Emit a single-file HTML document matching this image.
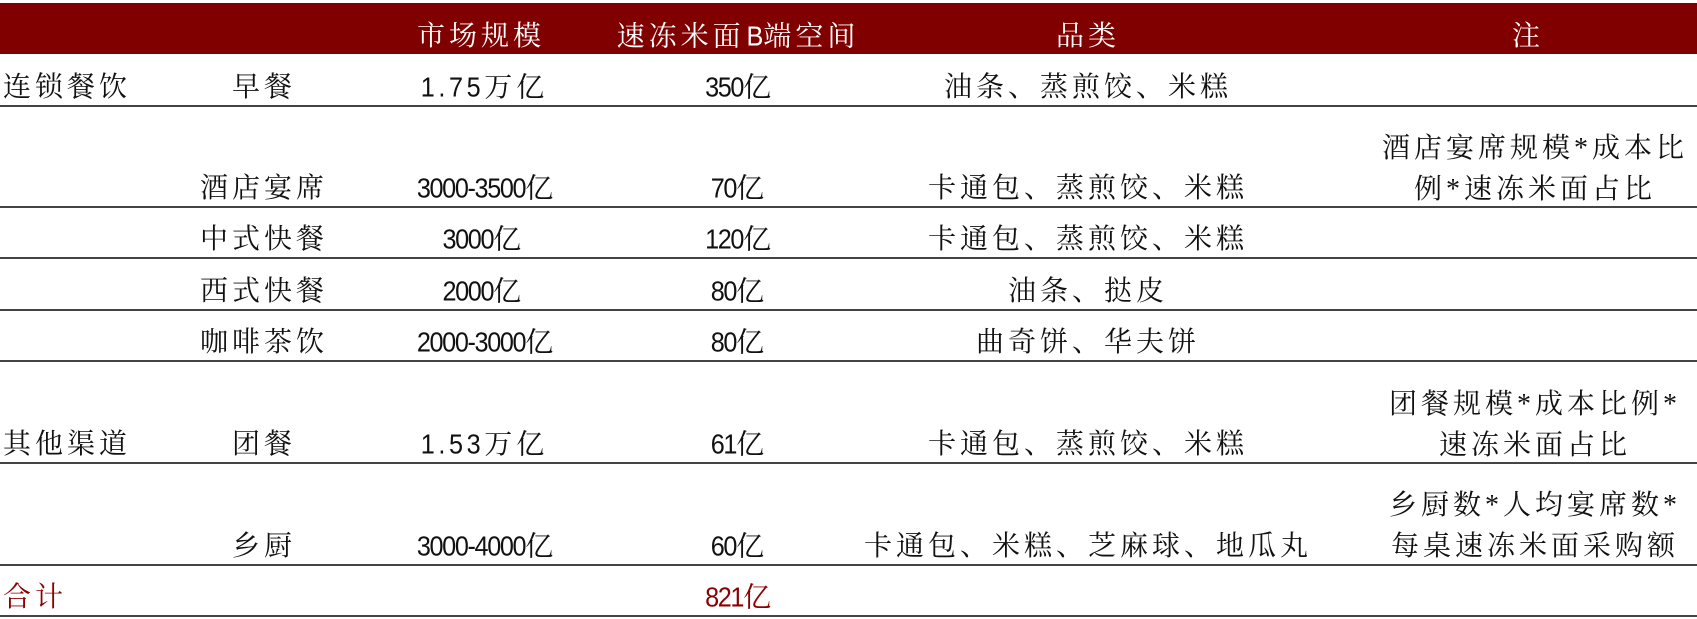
<!DOCTYPE html>
<html><head><meta charset="utf-8">
<style>
html,body{margin:0;padding:0;background:#fff;}
body{width:1697px;height:619px;position:relative;overflow:hidden;font-family:"Liberation Serif","Noto Serif CJK SC","Noto Sans CJK SC",serif;color:#111;}
.hd{position:absolute;left:0;top:3px;width:1697px;height:51px;background:#800000;}
.ln{position:absolute;left:0;width:1697px;height:2px;background:#444;}
.t{position:absolute;transform:translate(-50%,-50%);white-space:nowrap;font-size:28px;letter-spacing:4px;line-height:1;}
.l{position:absolute;transform:translateY(-50%);white-space:nowrap;font-size:28px;letter-spacing:4px;line-height:1;}
.n{font-family:"Liberation Sans",sans-serif;letter-spacing:-1.5px;font-size:28px;display:inline-block;transform:scaleX(0.9);transform-origin:right center;}
.w{color:#fff;}
.r{color:#8b0000;}
</style></head><body>
<div class="hd"></div>
<div class="t w" style="left:481px;top:37px">市场规模</div>
<div class="t w" style="left:738px;top:37px">速冻米面<span class="n" style="letter-spacing:0">B</span>端空间</div>
<div class="t w" style="left:1088px;top:37px">品类</div>
<div class="t w" style="left:1528px;top:37px">注</div>

<div class="ln" style="top:105px"></div>
<div class="ln" style="top:206px"></div>
<div class="ln" style="top:257px"></div>
<div class="ln" style="top:309px"></div>
<div class="ln" style="top:360px"></div>
<div class="ln" style="top:462px"></div>
<div class="ln" style="top:564px"></div>
<div class="ln" style="top:615px"></div>

<div class="l" style="left:3px;top:88px">连锁餐饮</div>
<div class="t" style="left:264px;top:88px">早餐</div>
<div class="t" style="left:481px;top:88px"><span class="n" style="letter-spacing:4px">1.75</span>万亿</div>
<div class="t" style="left:738px;top:88px"><span class="n">350</span>亿</div>
<div class="t" style="left:1088px;top:88px">油条、蒸煎饺、米糕</div>

<div class="t" style="left:264px;top:189px">酒店宴席</div>
<div class="t" style="left:481px;top:189px"><span class="n">3000-3500</span>亿</div>
<div class="t" style="left:738px;top:189px"><span class="n">70</span>亿</div>
<div class="t" style="left:1088px;top:189px">卡通包、蒸煎饺、米糕</div>
<div class="t" style="left:1535px;top:149px">酒店宴席规模*成本比</div>
<div class="t" style="left:1535px;top:190px">例*速冻米面占比</div>

<div class="t" style="left:264px;top:240px">中式快餐</div>
<div class="t" style="left:481px;top:240px"><span class="n">3000</span>亿</div>
<div class="t" style="left:738px;top:240px"><span class="n">120</span>亿</div>
<div class="t" style="left:1088px;top:240px">卡通包、蒸煎饺、米糕</div>

<div class="t" style="left:264px;top:292px">西式快餐</div>
<div class="t" style="left:481px;top:292px"><span class="n">2000</span>亿</div>
<div class="t" style="left:738px;top:292px"><span class="n">80</span>亿</div>
<div class="t" style="left:1088px;top:292px">油条、挞皮</div>

<div class="t" style="left:264px;top:343px">咖啡茶饮</div>
<div class="t" style="left:481px;top:343px"><span class="n">2000-3000</span>亿</div>
<div class="t" style="left:738px;top:343px"><span class="n">80</span>亿</div>
<div class="t" style="left:1088px;top:343px">曲奇饼、华夫饼</div>

<div class="l" style="left:3px;top:445px">其他渠道</div>
<div class="t" style="left:264px;top:445px">团餐</div>
<div class="t" style="left:481px;top:445px"><span class="n" style="letter-spacing:4px">1.53</span>万亿</div>
<div class="t" style="left:738px;top:445px"><span class="n">61</span>亿</div>
<div class="t" style="left:1088px;top:445px">卡通包、蒸煎饺、米糕</div>
<div class="t" style="left:1535px;top:405px">团餐规模*成本比例*</div>
<div class="t" style="left:1535px;top:446px">速冻米面占比</div>

<div class="t" style="left:264px;top:547px">乡厨</div>
<div class="t" style="left:481px;top:547px"><span class="n">3000-4000</span>亿</div>
<div class="t" style="left:738px;top:547px"><span class="n">60</span>亿</div>
<div class="t" style="left:1088px;top:547px">卡通包、米糕、芝麻球、地瓜丸</div>
<div class="t" style="left:1535px;top:506px">乡厨数*人均宴席数*</div>
<div class="t" style="left:1535px;top:547px">每桌速冻米面采购额</div>

<div class="l r" style="left:3px;top:598px">合计</div>
<div class="t r" style="left:738px;top:598px"><span class="n">821</span>亿</div>
</body></html>
